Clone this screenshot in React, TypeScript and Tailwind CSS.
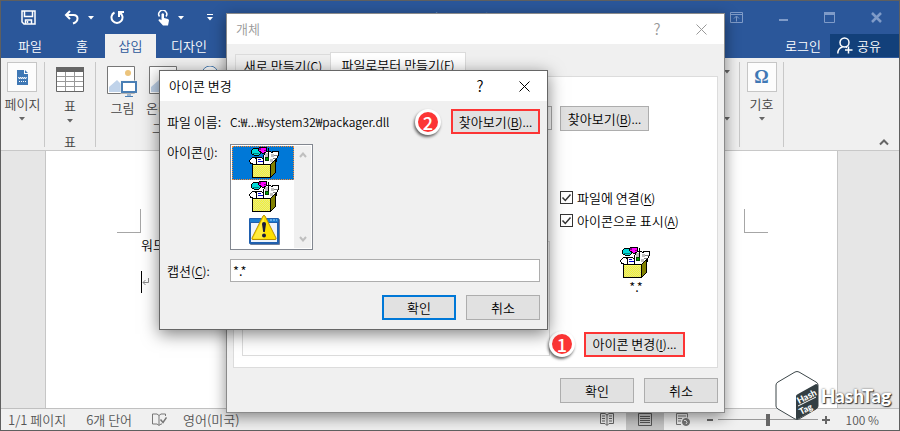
import type { ReactNode } from 'react';
import clsx from 'clsx';

const Caret = ({ className = 'text-[#666]' }: { className?: string }) => (
  <svg width="6" height="4" viewBox="0 0 6 4" className={className} aria-hidden="true">
    <path d="M0 0h6L3 3.5z" fill="currentColor" />
  </svg>
);

const ditherRows = [19, 20, 21, 22, 23, 24, 25, 26, 27, 28, 29];

const PackageIcon = () => (
  <svg width="32" height="32" viewBox="0 0 32 32" shapeRendering="crispEdges" className="shrink-0" aria-hidden="true">
    {/* papers sticking out of the box */}
    <path d="M14.500 8.500l3-4h4l1 1 2-1h5v4l-2 3v3l-4 4h-9z" fill="#fff" stroke="#000" />
    <path d="M16 6h3v4h-3zM22 7h3v3h-3zM21 12h3v3h-3z" fill="#c0c0c0" />
    <path d="M25 8.500h4M24 11.500h3" stroke="#808080" />
    <path d="M2.500 3.500l2-2h6l1 2v3l-2 2h-4l-3-2z" fill="#00d8d8" stroke="#000" />
    <path d="M4 6h6v1H4z" fill="#008080" />
    <path d="M9.500 1.500l1-1h7v4l-3 2h-1l-4-3z" fill="#ff00ff" stroke="#000" />
    <path d="M10 1h2v2h-2zM15 3h2v1h-2z" fill="#800080" />
    <path d="M19.500 1v10" stroke="#000" />
    <path d="M16 10h3v3h-3z" fill="#00a000" stroke="#004000" />
    <path d="M.5 13.500l3-3h3l3 7h-5l-1-1h-2z" fill="#fff" stroke="#000" />
    <path d="M7.500 10.500h5l2 2v5h-7z" fill="#fff" stroke="#000" />
    <path d="M9 12h3v1H9zM9 14h5v1H9z" fill="#0000d0" />
    {/* box */}
    <path d="M3.500 17.500h18v13h-18z" fill="#f4f430" stroke="#000" />
    {ditherRows.map((y) => (
      <path key={y} d={`M${4 + (y % 2)} ${y + 0.5}H21`} stroke="#e6e68c" strokeDasharray="1 1" />
    ))}
    <path d="M4 18.500h17" stroke="#ffff60" />
    <path d="M21.500 17.500l5-5v13l-5 5z" fill="#808000" stroke="#000" />
  </svg>
);

const WarningWindowIcon = () => (
  <svg width="32" height="32" viewBox="0 0 32 32" className="shrink-0" aria-hidden="true">
    <rect x="1" y="4" width="30" height="26" rx="1" fill="#6d7f9c" />
    <rect x="0" y="3" width="30" height="26" rx="1" fill="#1f5fae" />
    <rect x="2" y="8" width="26" height="19" fill="#eef4fb" />
    <path d="M1 4h28v3H1z" fill="#1c7ed0" />
    <path d="M21 5h2M24 5h2M27 5h1" stroke="#a9d4ff" />
    <path d="M14 1q1-1.500 2 0l11 22q.5 1.500-1 1.500H4q-1.500 0-1-1.500z" fill="#ffe000" stroke="#b89000" />
    <path d="M15 2L4 23.500h11z" fill="#fff36b" opacity=".6" />
    <path d="M13 9q0-2 2-2t2 2l-1.200 8h-1.600z" fill="#1a1a3a" />
    <circle cx="15" cy="20.500" r="2" fill="#1a1a3a" />
  </svg>
);

const CloseGlyph = () => (
  <svg width="11" height="11" viewBox="0 0 11 11" fill="none" stroke="currentColor" aria-hidden="true">
    <path d="M.5.5l10 10M10.500.5l-10 10" />
  </svg>
);

type DialogTitleProps = { title: string; className: string };

const DialogTitle = ({ title, className }: DialogTitleProps) => (
  <header className={clsx('flex h-[30px] items-center bg-white pl-[9px] pr-[17px]', className)}>
    <h2 className="flex-1">{title}</h2>
    <button type="button" aria-label="도움말" className="w-[10px] text-[15px]">?</button>
    <button type="button" aria-label="닫기" className="ml-[34px]"><CloseGlyph /></button>
  </header>
);

type PushButtonProps = { children: ReactNode; look?: 'plain' | 'focus' | 'marked'; className?: string };

const PushButton = ({ children, look = 'plain', className = 'w-[74px]' }: PushButtonProps) => (
  <button
    type="button"
    className={clsx(
      'flex h-[25px] shrink-0 items-center justify-center whitespace-nowrap bg-[#e1e1e1] text-black',
      look === 'plain' && 'border border-[#adadad]',
      look === 'focus' && 'border-2 border-[#0078d7]',
      look === 'marked' && 'border-2 border-[#fc3535]',
      className,
    )}
  >
    {children}
  </button>
);

// access key shown after a label, e.g. (B)...
const Key = ({ children, after }: { children: string; after?: string }) => (
  <span className="text-[12px]">(<span className="underline underline-offset-2">{children}</span>){after}</span>
);

const StepBadge = ({ children }: { children: string }) => (
  <span className="flex size-[26px] shrink-0 items-center justify-center rounded-full border-[3px] border-white bg-[#fc3535] text-[18px] font-medium text-white shadow-[-1px_2px_3px_rgba(0,0,0,0.6)]">
    {children}
  </span>
);

const CheckOption = ({ id, children }: { id: string; children: ReactNode }) => (
  <div className="flex h-[23px] items-center gap-1">
    <span className="relative flex size-[13px]">
      <input id={id} type="checkbox" defaultChecked className="size-[13px] appearance-none border border-[#333] bg-white" />
      <svg width="13" height="13" viewBox="0 0 13 13" className="pointer-events-none absolute inset-0" aria-hidden="true">
        <path d="M2.500 6.500l2.800 3 5.200-6" fill="none" stroke="#333" strokeWidth="1.500" />
      </svg>
    </span>
    <label htmlFor={id}>{children}</label>
  </div>
);

const TitleBar = () => (
  <div className="flex h-[33px] items-center text-white">
    <div className="flex flex-1 items-center pl-5">
      <button type="button" aria-label="저장">
        <svg width="15" height="15" viewBox="0 0 15 15" fill="none" stroke="currentColor" strokeWidth="1.500">
          <path d="M1 1h13v13H3l-2-2zM3.500 1v5.500h8V1M4.500 14v-4h6v4" />
          <path d="M6.500 11v2" />
        </svg>
      </button>
      <button type="button" aria-label="실행 취소" className="ml-7 flex items-center gap-2">
        <svg width="16" height="15" viewBox="0 0 16 15" fill="none" stroke="currentColor" strokeWidth="2">
          <path d="M6 1L2 5l4 4M2 5h7.500q4 0 4 3.500T9 13.500" />
        </svg>
        <Caret className="text-white" />
      </button>
      <button type="button" aria-label="다시 실행" className="ml-4">
        <svg width="15" height="15" viewBox="0 0 15 15" fill="none" stroke="currentColor" strokeWidth="2">
          <path d="M4.500 2.500a5.500 5.500 0 1 0 5 0M9 7V2h5" />
        </svg>
      </button>
      <button type="button" aria-label="터치 모드" className="ml-8 flex items-center gap-2">
        <svg width="13" height="16" viewBox="0 0 13 16">
          <path d="M2.500 6.500a4 4 0 1 1 6.500 0" fill="none" stroke="currentColor" strokeWidth="1.500" />
          <path d="M4.500 4q1.300-1.500 2.500 0v4l4 1q1 .5 1 1.500l-1 5H6l-4.500-5q0-1.500 1.500-1.300l1.500 1z" fill="currentColor" />
        </svg>
        <Caret className="text-white" />
      </button>
      <button type="button" aria-label="빠른 실행 도구 모음 사용자 지정" className="ml-[23px]">
        <svg width="6" height="7" viewBox="0 0 6 7" fill="currentColor">
          <path d="M0 0h6v1H0zM0 3h6L3 6.500z" />
        </svg>
      </button>
    </div>
    <span className="text-[#8fa8cf]">문서1 - Word</span>
    <div className="flex flex-1 items-center justify-end gap-9 pr-[17px] text-[#7f9bc8]">
      <button type="button" aria-label="리본 메뉴 표시 옵션">
        <svg width="13" height="11" viewBox="0 0 13 11" fill="none" stroke="currentColor">
          <path d="M.5.5h12v10H.5zM.5 2.500h12M6.500 9.500v-5M4 6.500L6.500 4 9 6.500" />
        </svg>
      </button>
      <button type="button" aria-label="최소화">
        <svg width="9" height="11" viewBox="0 0 9 11"><path d="M0 7h9v2H0z" fill="currentColor" /></svg>
      </button>
      <button type="button" aria-label="최대화">
        <svg width="11" height="11" viewBox="0 0 11 11"><path d="M.5 1v9.500h10V1" fill="none" stroke="currentColor" /><path d="M0 0h11v3H0z" fill="currentColor" /></svg>
      </button>
      <button type="button" aria-label="닫기">
        <svg width="11" height="11" viewBox="0 0 11 11"><path d="M1 1l9 9M10 1l-9 9" stroke="currentColor" strokeWidth="2.500" /></svg>
      </button>
    </div>
  </div>
);

const MenuTabs = () => (
  <nav className="flex h-6 items-stretch text-white">
    <button type="button" className="w-[58px]">파일</button>
    <button type="button" className="w-[46px]">홈</button>
    <button type="button" className="w-[51px] bg-[#f0f0f0] text-[#2b579a]">삽입</button>
    <button type="button" className="w-[66px]">디자인</button>
    <button type="button" className="ml-auto px-[9px]">로그인</button>
    <button type="button" className="mb-px flex w-[69px] items-center gap-1 bg-[#12407a] pl-[7px]">
      <svg width="16" height="17" viewBox="0 0 16 17" fill="none" stroke="currentColor" strokeWidth="1.500" aria-hidden="true">
        <circle cx="7.500" cy="5.500" r="4.500" />
        <path d="M.8 16.500q0-5 4.700-6.500M9 10l1 .5M11.500 9.500v7M8 13h7.500" />
      </svg>
      공유
    </button>
  </nav>
);

const PictureIcon = () => (
  <svg width="31" height="32" viewBox="0 0 31 32" aria-hidden="true">
    <path d="M.5.5h27v27H.5z" fill="#fff" stroke="#777" />
    <circle cx="21" cy="7" r="3" fill="#ecc47c" />
    <path d="M2 26V21l8-7 6 6v6z" fill="#c0d3ea" />
    <path d="M13.500 14.500h17v13h-17z" fill="#f0f0f0" />
    <path d="M15 16h14v10H15z" fill="#fff" stroke="#4a7fb5" strokeWidth="2" />
    <path d="M20 29h4M18 30.500h8" stroke="#4a7fb5" />
  </svg>
);

const Ribbon = () => (
  <div className="flex h-[93px] shrink-0 items-start border-b border-[#c8c8c8] bg-[#f0f0f0] pt-1 text-[#444]">
    <div className="flex h-[85px] w-11 flex-col items-center border-r border-[#c8c8c8]">
      <button type="button" className="flex flex-col items-center">
        <span className="flex size-[30px] items-center justify-center border border-[#c6c6c6] bg-[#fcfcfc]">
          <svg width="11" height="15" viewBox="0 0 11 15" aria-hidden="true">
            <path d="M0 0h7v4h4v11H0zM8 0l3 3H8z" fill="#3f78b5" />
            <path d="M1.500 7l1 2 1-2 1 2 1-2 1 2 1-2 1 2 1-2" fill="none" stroke="#fff" />
            <path d="M2 11.500h7" stroke="#fff" strokeDasharray="1 1" />
          </svg>
        </span>
        <span className="leading-6">페이지</span>
        <span className="py-px"><Caret /></span>
      </button>
    </div>
    <div className="flex h-[85px] w-[51px] flex-col items-center border-r border-[#c8c8c8] pt-[5px]">
      <button type="button" className="flex flex-col items-center">
        <svg width="28" height="25" viewBox="0 0 28 25" aria-hidden="true">
          <path d="M.5.5h27v24H.5z" fill="#fff" stroke="#666" />
          <path d="M1 9.500h26M1 14.500h26M1 19.500h26M9.500 5v19M18.500 5v19" stroke="#999" />
          <path d="M0 0h28v5H0z" fill="#666" />
        </svg>
        <span className="pt-1 leading-5">표</span>
        <span className="py-[3px]"><Caret /></span>
      </button>
      <span className="pt-[6px] leading-5">표</span>
    </div>
    <div className="flex items-start pt-1">
      <button type="button" className="flex w-[49px] flex-col items-center pl-1">
        <PictureIcon />
        <span className="leading-5">그림</span>
      </button>
      <button type="button" className="flex w-[38px] flex-col items-center">
        <PictureIcon />
        <span className="whitespace-nowrap leading-5">온라인</span>
        <span className="leading-5">그림</span>
      </button>
      <button type="button" aria-label="도형" className="pl-[7px]">
        <svg width="29" height="28" viewBox="0 0 29 28" aria-hidden="true">
          <circle cx="20" cy="8" r="8" fill="#fff" stroke="#4a7fb5" />
          <path d="M0 4h15v15H0z" fill="#4a7fb5" />
        </svg>
      </button>
    </div>
    <div className="ml-auto flex h-[85px] flex-col justify-between border-r border-[#c8c8c8] pb-[26px] pr-[9px] pt-2">
      <Caret />
      <Caret />
    </div>
    <div className="flex h-[85px] w-11 flex-col items-center border-r border-[#c8c8c8]">
      <button type="button" className="flex flex-col items-center">
        <span className="flex size-[30px] items-center justify-center border border-[#c6c6c6] bg-[#fcfcfc] font-['Liberation_Serif',serif] text-[18px] font-bold text-[#3f78b5]">Ω</span>
        <span className="leading-6">기호</span>
        <span className="py-px"><Caret /></span>
      </button>
    </div>
    <button type="button" aria-label="리본 메뉴 축소" className="self-end pb-1 pl-[95px] pr-[10px]">
      <svg width="10" height="7" viewBox="0 0 10 7" fill="none" stroke="#666" strokeWidth="2">
        <path d="M1 5.500L5 1.500l4 4" />
      </svg>
    </button>
  </div>
);

const DocumentArea = () => (
  <div className="flex flex-1 bg-[#e6e6e6] pl-11 pr-[61px]">
    <div className="flex-1 border-x border-[#c6c6c6] bg-white pt-[58px] text-black">
      <div className="flex justify-between pl-[71px] pr-[69px]">
        <span className="size-6 border-b border-r border-[#a6a6a6]" />
        <span className="size-6 border-b border-l border-[#a6a6a6]" />
      </div>
      <div className="pl-[95px]">
        <p className="leading-6">워드</p>
        <p className="mt-[14px] flex h-[22px] items-center border-l border-black text-[#888]">
          <svg width="7" height="8" viewBox="0 0 7 8" fill="none" stroke="currentColor" aria-hidden="true">
            <path d="M6.500 0v4.500H1M3.500 2L1 4.500 3.500 7" />
          </svg>
        </p>
      </div>
    </div>
  </div>
);

const StatusBar = () => (
  <footer className="flex h-[22px] shrink-0 items-stretch border-t border-[#c0c0c0] bg-[#f0f0f0] text-[#555]">
    <div className="flex flex-1 items-center pl-[7px]">
      <span>1/1 페이지</span>
      <span className="pl-5">6개 단어</span>
      <svg width="15" height="13" viewBox="0 0 15 13" fill="none" stroke="#777" className="ml-5 mr-4" aria-hidden="true">
        <path d="M7 2.500L5 1H.5v10H5l2 1.500L9 11h1M7 2.500V12M7 2.500L9 1h4.500v2" />
        <path d="M8.500 6.500l2.500 3 3.500-5" strokeWidth="1.500" />
      </svg>
      <span>영어(미국)</span>
    </div>
    <button type="button" aria-label="읽기 모드" className="px-3">
      <svg width="14" height="13" viewBox="0 0 14 13" fill="none" stroke="#666">
        <path d="M7 2L5 .5H.5v10H5L7 12.500l2-2h4.500V.5H9zM7 2v10M2 3h3M2 5.500h3M2 8h3M9 3h3M9 5.500h3M9 8h3" />
      </svg>
    </button>
    <button type="button" aria-label="인쇄 모양" className="flex w-[38px] items-center justify-center bg-[#c6c6c6]">
      <svg width="14" height="13" viewBox="0 0 14 13" fill="none" stroke="#555">
        <path d="M.5.5h13v12H.5zM2 3.500h10M2 5.500h10M2 7.500h10M2 9.500h10" />
      </svg>
    </button>
    <button type="button" aria-label="웹 모양" className="px-3">
      <svg width="14" height="13" viewBox="0 0 14 13" fill="none" stroke="#777">
        <path d="M5 11.500H.5V.5h11v4M2 3h8M2 5.500h4M2 8h3" />
        <circle cx="10" cy="9" r="3.500" fill="#777" />
        <path d="M8 7.500h2l1 2-1 1.500" stroke="#eee" />
      </svg>
    </button>
    <div className="flex items-center">
      <button type="button" aria-label="축소" className="px-[5px]"><span className="block h-[2px] w-[6px] bg-[#666]" /></button>
      <input
        type="range"
        aria-label="확대/축소"
        defaultValue="50"
        className="h-3 w-[100px] appearance-none bg-[linear-gradient(#999,#999)] bg-[length:100%_1px] bg-center bg-no-repeat [&::-webkit-slider-thumb]:h-3 [&::-webkit-slider-thumb]:w-1 [&::-webkit-slider-thumb]:appearance-none [&::-webkit-slider-thumb]:bg-[#666]"
      />
      <button type="button" aria-label="확대" className="px-1">
        <svg width="8" height="8" viewBox="0 0 8 8"><path d="M4 0v8M0 4h8" stroke="#666" strokeWidth="2" /></svg>
      </button>
    </div>
    <span className="flex items-center whitespace-pre pl-3 pr-5 text-[12px]">100 %</span>
  </footer>
);

const ObjectDialog = () => (
  <section
    role="dialog"
    aria-label="개체"
    className="absolute left-[225px] top-3 flex h-[400px] w-[499px] flex-col border border-[#8a8a8a] bg-[#f0f0f0] text-black shadow-[0_4px_14px_rgba(0,0,0,0.45)]"
  >
    <DialogTitle title="개체" className="text-[#999]" />
    <div className="flex flex-1 flex-col px-[6px] pb-[9px] pt-2">
      <div role="tablist" className="flex items-end pl-[2px]">
        <button type="button" role="tab" className="mt-[2px] h-[22px] w-[95px] border-l border-t border-[#dcdcdc]">
          새로 만들기<Key>C</Key>
        </button>
        <button type="button" role="tab" aria-selected="true" className="-mb-px h-[25px] w-[136px] border border-b-0 border-[#dcdcdc] bg-white">
          파일로부터 만들기<Key>F</Key>
        </button>
      </div>
      <div className="flex h-[292px] border border-[#dcdcdc] bg-white pl-2">
        <div className="flex w-[318px] flex-col pt-[29px]">
          <input type="text" aria-label="파일 이름" className="h-6 w-[310px] border border-[#adadad]" />
          <div className="mt-[111px] h-[115px] w-[308px] border border-[#dcdcdc]" />
        </div>
        <div className="flex flex-1 flex-col items-start pt-[29px]">
          <PushButton className="w-[89px]">찾아보기<Key after="...">B</Key></PushButton>
          <div className="mt-[55px]">
            <CheckOption id="link-file">파일에 연결<Key>K</Key></CheckOption>
            <CheckOption id="show-icon">아이콘으로 표시<Key>A</Key></CheckOption>
          </div>
          <div className="mt-[15px] flex w-[152px] flex-col items-center leading-4">
            <PackageIcon />
            <span>*.*</span>
          </div>
          <div className="-ml-[11px] mt-9 flex items-center gap-[9px]">
            <StepBadge>1</StepBadge>
            <PushButton look="marked" className="w-[101px]">아이콘 변경<Key after="...">I</Key></PushButton>
          </div>
        </div>
      </div>
      <div className="mt-auto flex justify-end gap-[10px]">
        <PushButton>확인</PushButton>
        <PushButton>취소</PushButton>
      </div>
    </div>
  </section>
);

const ChangeIconDialog = () => (
  <section
    role="dialog"
    aria-label="아이콘 변경"
    className="absolute left-[158px] top-[69px] flex w-[389px] flex-col border border-[#666] bg-[#f0f0f0] text-black shadow-[0_4px_16px_rgba(0,0,0,0.5)]"
  >
    <DialogTitle title="아이콘 변경" className="text-black" />
    <div className="flex flex-col pb-[9px] pl-[7px] pr-[7px] pt-2">
      <div className="flex h-[25px] items-center">
        <span className="w-[63px]">파일 이름:</span>
        <span className="flex-1 whitespace-nowrap text-[12px]">C:₩...₩system32₩packager.dll</span>
        <span className="mr-[10px]"><StepBadge>2</StepBadge></span>
        <PushButton look="marked" className="w-[89px]">찾아보기<Key after="...">B</Key></PushButton>
      </div>
      <div className="mt-[10px] flex items-start">
        <span id="icon-label" className="w-[63px] leading-4">아이콘<Key after=":">I</Key></span>
        <div className="flex h-[106px] w-[83px] border border-[#828790] bg-white p-px">
          <ul role="listbox" aria-labelledby="icon-label" className="w-[62px]">
            <li role="option" aria-selected="true" className="flex h-[34px] items-center justify-center border border-dotted border-[#ff8728] bg-[#0078d7] pl-1"><PackageIcon /></li>
            <li role="option" aria-selected="false" className="flex h-[34px] items-center justify-center pl-1"><PackageIcon /></li>
            <li role="option" aria-selected="false" className="flex h-[34px] items-center justify-center pl-1"><WarningWindowIcon /></li>
          </ul>
          <div className="flex flex-1 flex-col items-center justify-between bg-[#f0f0f0] py-[6px]">
            <svg width="8" height="6" viewBox="0 0 8 6" fill="none" stroke="#bfbfbf" strokeWidth="2" aria-hidden="true"><path d="M1 5l3-3.500L7 5" /></svg>
            <svg width="8" height="6" viewBox="0 0 8 6" fill="none" stroke="#bfbfbf" strokeWidth="2" aria-hidden="true"><path d="M1 1l3 3.500L7 1" /></svg>
          </div>
        </div>
      </div>
      <div className="mt-[9px] flex items-center">
        <label htmlFor="caption" className="w-[63px]">캡션<Key after=":">C</Key></label>
        <input id="caption" type="text" defaultValue="*.*" className="h-[23px] flex-1 border border-[#adadad] bg-white px-[2px]" />
      </div>
      <div className="mt-[13px] flex justify-end gap-[10px]">
        <PushButton look="focus">확인</PushButton>
        <PushButton>취소</PushButton>
      </div>
    </div>
  </section>
);

const Watermark = () => (
  <div className="pointer-events-none absolute bottom-2 right-2 flex items-center gap-[2px]">
    <svg width="44" height="52" viewBox="0 0 44 52" aria-hidden="true">
      <path d="M20 2q2-1 4 0l17 10q2 1 2 3v21q0 2-2 3L24 49q-2 1-4 0L3 39q-2-1-2-3V15q0-2 2-3z" fill="#fff" stroke="#3c4649" />
      <path d="M21 26q0-1 2-2l18-10q2 0 2 2v20q0 2-2 3L23 49q-2 1-2-1z" fill="#343f43" />
      <path d="M23 36l18-9" stroke="#fff" />
      <g fill="#fff" fontSize="9" fontWeight="900" fontFamily="Lato, sans-serif">
        <text transform="translate(24 34) rotate(-27)">Hash</text>
        <text transform="translate(26 45) rotate(-27)">Tag</text>
      </g>
    </svg>
    <span className="font-['Lato',sans-serif] text-[19px] font-black text-white [text-shadow:1px_1px_1px_#333,0_0_2px_#555]">HashTag</span>
  </div>
);

const App = () => (
  <main className="relative flex min-h-screen flex-col overflow-hidden border border-[#5f5f5f] bg-[#2b579a] font-['Noto_Sans_CJK_KR',sans-serif] text-[13px] font-[350] leading-5">
    <TitleBar />
    <MenuTabs />
    <Ribbon />
    <DocumentArea />
    <StatusBar />
    <ObjectDialog />
    <ChangeIconDialog />
    <Watermark />
  </main>
);

export default App;
